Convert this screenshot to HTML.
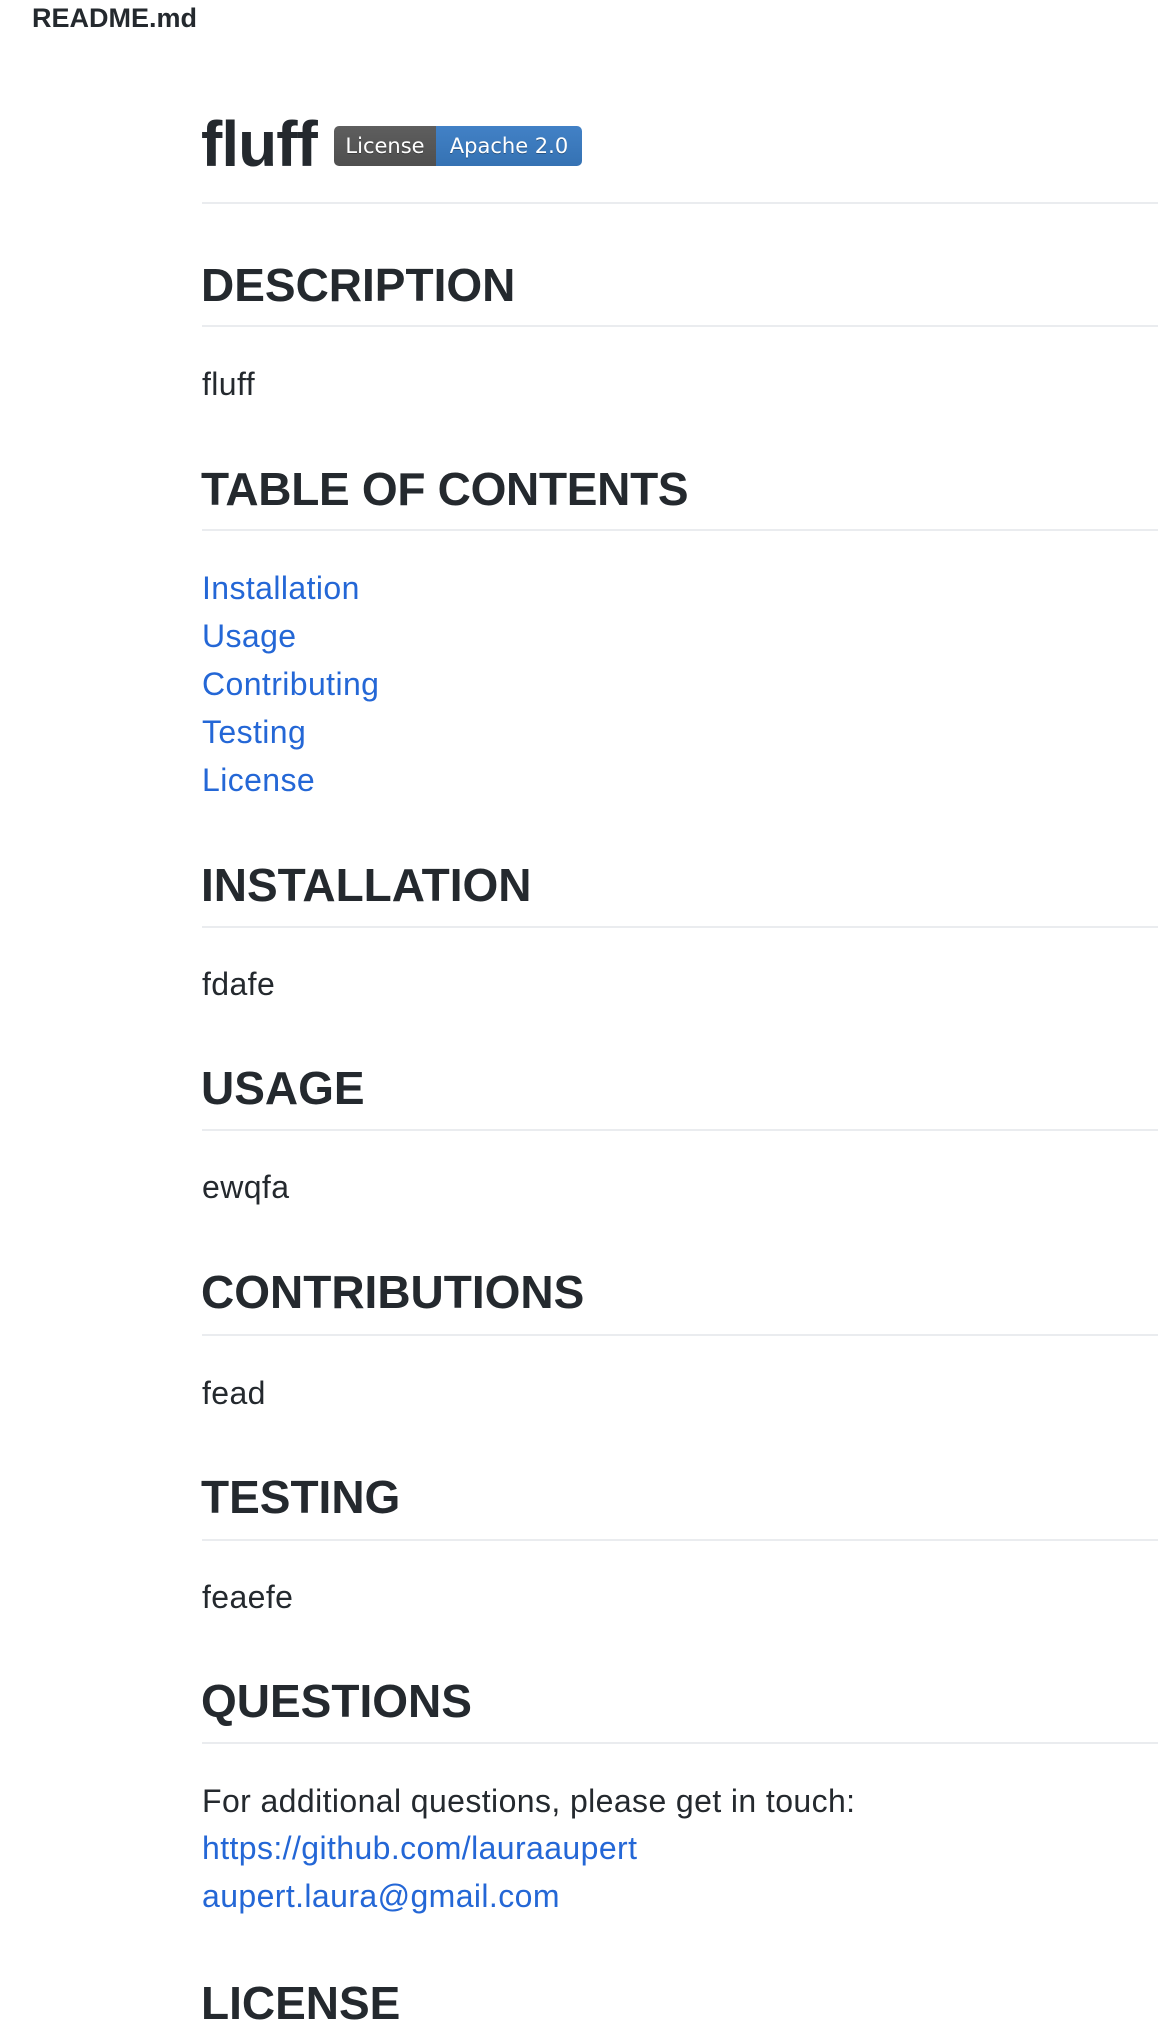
<!DOCTYPE html>
<html><head><meta charset="utf-8"><style>
html,body{margin:0;padding:0;background:#fff;}
body{width:1158px;height:2030px;position:relative;overflow:hidden;font-family:"Liberation Sans",sans-serif;color:#24292e;}
.a{position:absolute;white-space:nowrap;line-height:1;}
.r{left:32px;font-size:27px;font-weight:bold;top:5px;}
.h1{left:201px;font-size:64px;font-weight:bold;top:112px;letter-spacing:-1px;}
.h2{left:201px;font-size:46px;font-weight:bold;}
.p{left:202px;font-size:32px;letter-spacing:0.4px;margin-top:-1px;}
.l{color:#2467d6;}
.hr{position:absolute;left:202px;right:0;height:2px;background:#eaecef;}
.badge{position:absolute;left:334px;top:126px;width:248px;height:40px;border-radius:5px;overflow:hidden;font-family:"DejaVu Sans",sans-serif;font-size:21px;color:#fff;text-shadow:0 1px 0 rgba(0,0,0,.3);}
.badge span{position:absolute;top:0;height:40px;line-height:40px;text-align:center;}
</style></head><body>
<div class="a r">README.md</div>
<div class="a h1">fluff</div>
<div class="badge"><span style="left:0;width:102px;background:linear-gradient(#5e5e5e,#4f4f4f);">License</span><span style="left:102px;width:146px;background:linear-gradient(#4281c6,#3572b3);">Apache 2.0</span></div>
<div class="hr" style="top:202px"></div>

<div class="a h2" style="top:262px">DESCRIPTION</div>
<div class="hr" style="top:325px"></div>
<div class="a p" style="top:369px">fluff</div>

<div class="a h2" style="top:466px;letter-spacing:-0.3px">TABLE OF CONTENTS</div>
<div class="hr" style="top:529px"></div>
<div class="a p l" style="top:573px">Installation</div>
<div class="a p l" style="top:621px">Usage</div>
<div class="a p l" style="top:669px">Contributing</div>
<div class="a p l" style="top:717px">Testing</div>
<div class="a p l" style="top:765px">License</div>

<div class="a h2" style="top:862px">INSTALLATION</div>
<div class="hr" style="top:926px"></div>
<div class="a p" style="top:969px">fdafe</div>

<div class="a h2" style="top:1065px">USAGE</div>
<div class="hr" style="top:1129px"></div>
<div class="a p" style="top:1172px">ewqfa</div>

<div class="a h2" style="top:1269px">CONTRIBUTIONS</div>
<div class="hr" style="top:1334px"></div>
<div class="a p" style="top:1378px">fead</div>

<div class="a h2" style="top:1474px">TESTING</div>
<div class="hr" style="top:1539px"></div>
<div class="a p" style="top:1582px">feaefe</div>

<div class="a h2" style="top:1678px">QUESTIONS</div>
<div class="hr" style="top:1742px"></div>
<div class="a p" style="top:1786px">For additional questions, please get in touch:</div>
<div class="a p l" style="top:1833px">https://github.com/lauraaupert</div>
<div class="a p l" style="top:1881px">aupert.laura@gmail.com</div>

<div class="a h2" style="top:1980px">LICENSE</div>
</body></html>
